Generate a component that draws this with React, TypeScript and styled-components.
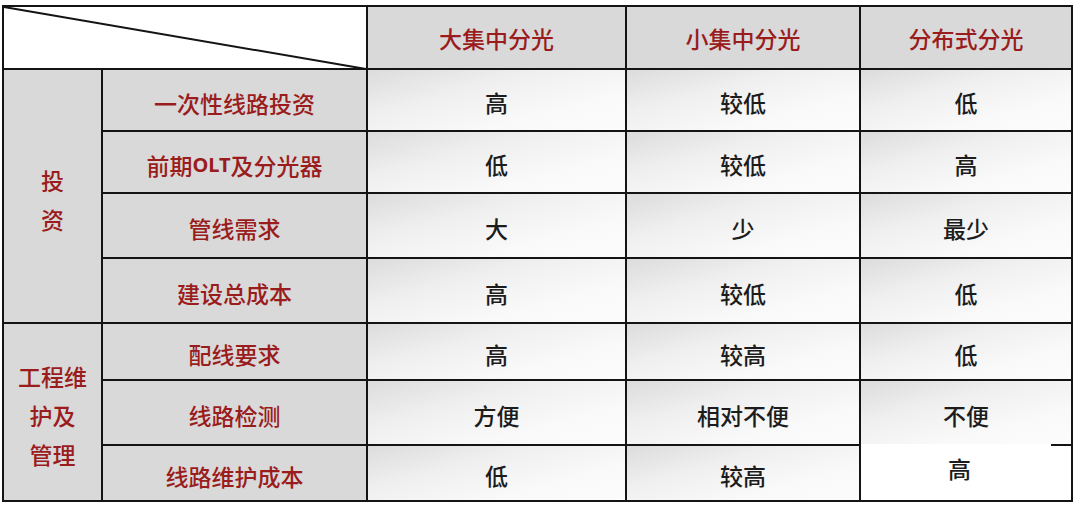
import React from 'react'
import styled, { createGlobalStyle } from 'styled-components'

const GlobalStyle = createGlobalStyle`
  html, body {
    margin: 0;
    padding: 0;
    background: #ffffff;
  }
  body {
    font-family: "Noto Sans CJK SC", "Noto Sans", sans-serif;
  }
`

const Page = styled.div`
  width: 1080px;
  height: 505px;
  padding: 5px 0 0 2px;
  box-sizing: border-box;
`

const Table = styled.div`
  display: grid;
  grid-template-columns: 97px 263px 257px 232px 210px;
  grid-template-rows: 61px 60px 60px 63px 63px 55px 63px 54px;
  gap: 2px;
  padding: 2px;
  width: 1071px;
  box-sizing: border-box;
  background: #141414;
`

const Corner = styled.div`
  grid-column: 1 / 3;
  background: #ffffff;
  position: relative;
  svg {
    position: absolute;
    left: -2px;
    top: -1px;
  }
`

const Cell = styled.div<{ $tone: 'gray' | 'light' | 'white' }>`
  display: flex;
  align-items: center;
  justify-content: center;
  text-align: center;
  font-size: 23px;
  font-weight: 500;
  box-sizing: border-box;
  background: ${({ $tone }) =>
    $tone === 'gray'
      ? '#d9d9d9'
      : $tone === 'white'
      ? '#ffffff'
      : 'linear-gradient(165deg, #dcdcdc 0%, #efefef 35%, #f9f9f9 70%, #fcfcfc 100%)'};
`

const HeadCell = styled(Cell)`
  color: #9a1c1c;
`

const LabelCell = styled(Cell)`
  color: #9a1c1c;
  padding-top: 5px;
`

const GroupCell = styled(Cell)<{ $span: string; $shift: number }>`
  grid-row: ${({ $span }) => $span};
  color: #9a1c1c;
  flex-direction: column;
  line-height: 39px;
  padding-top: ${({ $shift }) => $shift}px;
`

const ValueCell = styled(Cell)`
  color: #1c1c1c;
  padding-top: 4px;
`

const PatchedCell = styled(Cell)`
  color: #1c1c1c;
  position: relative;
  align-items: flex-start;
  justify-content: flex-start;
  padding: 5px 0 0 87px;
  &::before {
    content: '';
    position: absolute;
    left: 0;
    top: -2px;
    width: 190px;
    height: 2px;
    background: #ffffff;
  }
`

const Latin = styled.span`
  font-family: "Noto Sans", "Liberation Sans", sans-serif;
  font-weight: 700;
  font-size: 20px;
`

const headers = ['大集中分光', '小集中分光', '分布式分光']

const rows: { label: React.ReactNode; values: string[] }[] = [
  { label: '一次性线路投资', values: ['高', '较低', '低'] },
  {
    label: (
      <>
        前期<Latin>OLT</Latin>及分光器
      </>
    ),
    values: ['低', '较低', '高'],
  },
  { label: '管线需求', values: ['大', '少', '最少'] },
  { label: '建设总成本', values: ['高', '较低', '低'] },
  { label: '配线要求', values: ['高', '较高', '低'] },
  { label: '线路检测', values: ['方便', '相对不便', '不便'] },
  { label: '线路维护成本', values: ['低', '较高', '高'] },
]

const App: React.FC = () => {
  return (
    <Page>
      <GlobalStyle />
      <Table>
        <Corner>
          <svg width="366" height="64" viewBox="0 0 366 64">
            <line x1="2" y1="1" x2="364" y2="63" stroke="#141414" strokeWidth="2" />
          </svg>
        </Corner>
        {headers.map((h) => (
          <HeadCell key={h} $tone="gray">
            {h}
          </HeadCell>
        ))}
        {rows.map((row, i) => (
          <React.Fragment key={i}>
            {i === 0 && (
              <GroupCell $tone="gray" $span="2 / 6" $shift={8}>
                <span>投</span>
                <span>资</span>
              </GroupCell>
            )}
            {i === 4 && (
              <GroupCell $tone="gray" $span="6 / 9" $shift={6}>
                <span>工程维</span>
                <span>护及</span>
                <span>管理</span>
              </GroupCell>
            )}
            <LabelCell $tone="gray">{row.label}</LabelCell>
            {row.values.map((v, j) =>
              i === 6 && j === 2 ? (
                <PatchedCell key={j} $tone="white">
                  {v}
                </PatchedCell>
              ) : (
                <ValueCell key={j} $tone="light">
                  {v}
                </ValueCell>
              )
            )}
          </React.Fragment>
        ))}
      </Table>
    </Page>
  )
}

export default App
